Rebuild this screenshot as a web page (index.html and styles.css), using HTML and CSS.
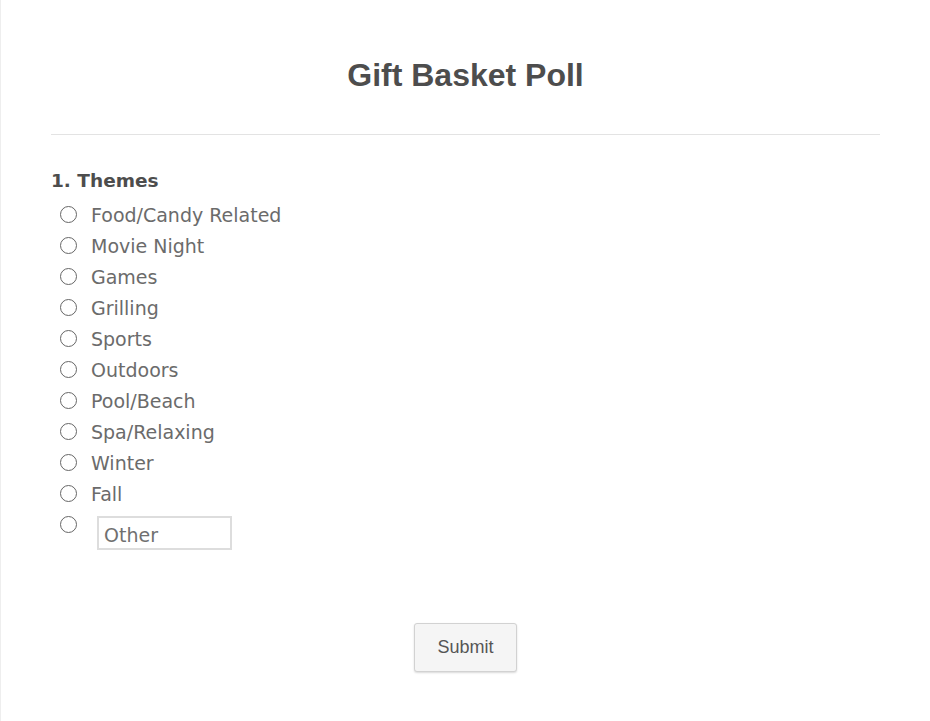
FILE: index.html
```html
<!DOCTYPE html>
<html>

<head>
    <title>Gift Basket Poll</title>
    <link rel="stylesheet" href="styles.css">
</head>

<body>
    <div class="page">
        <h1 class="title">Gift Basket Poll</h1>
        <hr class="rule">

        <div class="question">
            <h2>1. Themes</h2>
            <label class="option"><input type="radio" name="theme"><span>Food/Candy Related</span></label>
            <label class="option"><input type="radio" name="theme"><span>Movie Night</span></label>
            <label class="option"><input type="radio" name="theme"><span>Games</span></label>
            <label class="option"><input type="radio" name="theme"><span>Grilling</span></label>
            <label class="option"><input type="radio" name="theme"><span>Sports</span></label>
            <label class="option"><input type="radio" name="theme"><span>Outdoors</span></label>
            <label class="option"><input type="radio" name="theme"><span>Pool/Beach</span></label>
            <label class="option"><input type="radio" name="theme"><span>Spa/Relaxing</span></label>
            <label class="option"><input type="radio" name="theme"><span>Winter</span></label>
            <label class="option"><input type="radio" name="theme"><span>Fall</span></label>
            <label class="option other"><input type="radio" name="theme"><input type="text" class="other-input" placeholder="Other"></label>
        </div>

        <div class="actions">
            <button class="submit">Submit</button>
        </div>
    </div>
</body>

</html>
```

FILE: styles.css
```css
* {
    margin: 0;
    box-sizing: border-box;
}

body {
    background-color: #fff;
    font-family: "DejaVu Sans", Verdana, sans-serif;
    color: #666;
}

.page {
    height: 721px;
    border-left: 1px solid #eee;
    padding: 56px 50px 0 50px;
}

.title {
    font-family: "Liberation Sans", Arial, sans-serif;
    font-size: 32px;
    font-weight: bold;
    color: #4d4d4d;
    text-align: center;
    line-height: 38px;
}

.rule {
    border: 0;
    border-top: 1px solid #e3e3e3;
    margin-top: 40px;
}

.question {
    padding-top: 35px;
}

.question h2 {
    font-size: 18.5px;
    font-weight: bold;
    color: #4d4d4d;
    line-height: 22px;
    margin-bottom: 7px;
}

.option {
    display: flex;
    align-items: center;
    height: 31px;
    font-size: 19px;
    color: #6b6b6b;
}

.option input[type="radio"] {
    appearance: none;
    width: 17px;
    height: 17px;
    border: 1px solid #666;
    border-radius: 50%;
    margin: 0 14px 0 9px;
    background: #fff;
}

.option.other {
    align-items: flex-start;
    height: auto;
    padding-top: 7px;
}

.other-input {
    width: 135px;
    height: 34px;
    margin-left: 6px;
    margin-top: 0;
    border: 2px solid #ddd;
    padding: 4px 5px 0 5px;
    font-family: "DejaVu Sans", Verdana, sans-serif;
    font-size: 19px;
    color: #666;
}

.other-input::placeholder {
    color: #707070;
}

.actions {
    text-align: center;
    padding-top: 73px;
}

.submit {
    font-family: "Liberation Sans", Arial, sans-serif;
    font-size: 18px;
    color: #555;
    background-color: #f5f5f5;
    border: 1px solid #d2d2d2;
    border-radius: 3px;
    box-shadow: 0 1px 2px rgba(0, 0, 0, 0.15);
    width: 103px;
    height: 49px;
}
```
